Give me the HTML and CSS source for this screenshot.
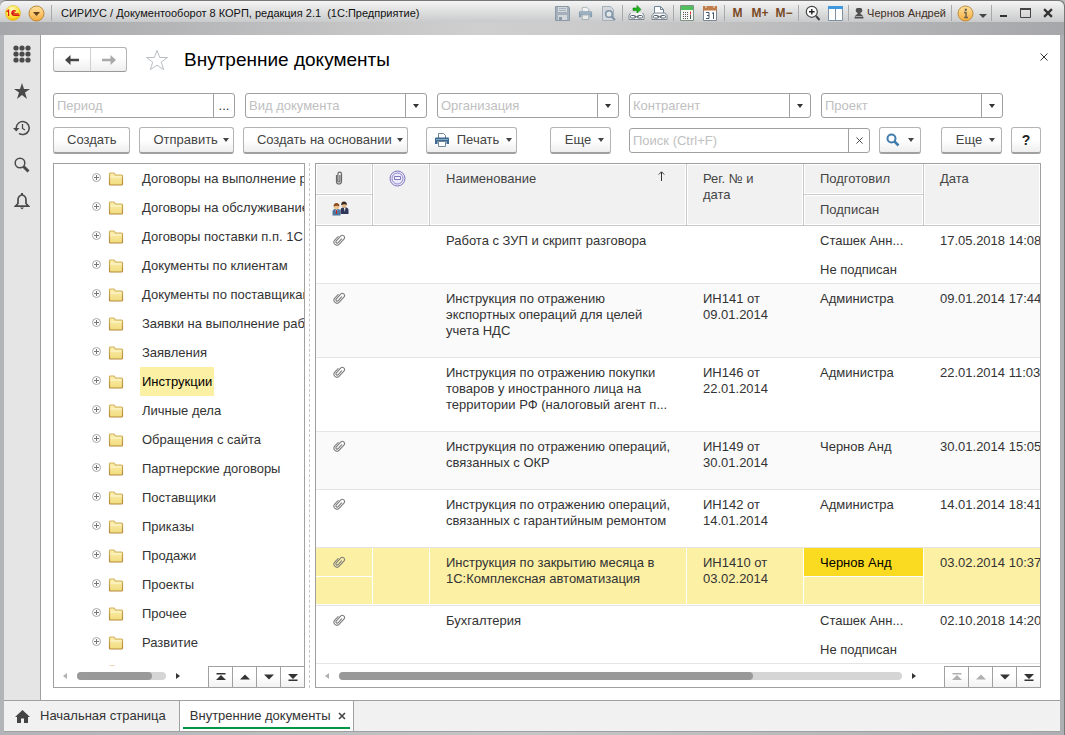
FILE: index.html
```html
<!DOCTYPE html>
<html lang="ru">
<head>
<meta charset="utf-8">
<title>Внутренние документы</title>
<link rel="stylesheet" href="styles.css">
</head>
<body>
<svg class="defs" width="0" height="0" aria-hidden="true">
  <defs>
    <linearGradient id="g-folder" x1="0" y1="0" x2="0" y2="1"><stop offset="0" stop-color="#fbeeb0"/><stop offset="1" stop-color="#f1dc7c"/></linearGradient>
    <linearGradient id="g-edge" x1="0" y1="0" x2="0" y2="1"><stop offset="0" stop-color="#d3b45c"/><stop offset="1" stop-color="#b48a3c"/></linearGradient>
    <radialGradient id="g-logo" cx=".45" cy=".3" r=".7"><stop offset="0" stop-color="#fffbd0"/><stop offset=".6" stop-color="#ffe83a"/><stop offset="1" stop-color="#f2b50c"/></radialGradient>
    <linearGradient id="g-amber" x1="0" y1="0" x2="0" y2="1"><stop offset="0" stop-color="#ffe3a0"/><stop offset="1" stop-color="#f5ab3c"/></linearGradient>
    <symbol id="i-folder" viewBox="0 0 16 14"><path d="M1.500 12V2q0-1 1-1h3.500l1.500 2h6q1 0 1 1v8q0 1-1 1h-11q-1 0-1-1z" fill="url(#g-folder)" stroke="url(#g-edge)" stroke-width="1.200"/><path d="M2.500 5h11" stroke="#fff8d6"/></symbol>
    <symbol id="i-plus" viewBox="0 0 9 9"><circle cx="4.500" cy="4.500" r="4" fill="#fff" stroke="#a8a8a8"/><path d="M2 4.500h5M4.500 2v5" stroke="#777"/></symbol>
    <symbol id="i-clip" viewBox="0 0 14 14"><path transform="rotate(42 7 7)" d="M4 5v5a3 3 0 0 0 6 0V3a2.200 2.200 0 0 0-4.400 0v6.500a1.300 1.300 0 0 0 2.600 0V4.500" fill="none" stroke="#7d7d7d" stroke-width="1.100" stroke-linecap="round"/></symbol>
    <symbol id="i-down" viewBox="0 0 6 4"><path d="M0 0h6L3 4z" fill="currentColor"/></symbol>
    <symbol id="i-tri-up" viewBox="0 0 10 10"><path d="M0 7.500h10L5 2.500z" fill="currentColor"/></symbol>
    <symbol id="i-tri-down" viewBox="0 0 10 10"><path d="M0 2.500h10L5 7.500z" fill="currentColor"/></symbol>
    <symbol id="i-tri-top" viewBox="0 0 10 10"><path d="M.5 1h9v1.500h-9zM0 8h10L5 3z" fill="currentColor"/></symbol>
    <symbol id="i-tri-end" viewBox="0 0 10 10"><path d="M.5 7.500h9V9h-9zM0 2h10L5 7z" fill="currentColor"/></symbol>
    <symbol id="i-left" viewBox="0 0 4 6"><path d="M4 0v6L0 3z" fill="currentColor"/></symbol>
    <symbol id="i-right" viewBox="0 0 4 6"><path d="M0 0v6l4-3z" fill="currentColor"/></symbol>
    <symbol id="i-cross" viewBox="0 0 8 8"><path d="M.5.5l7 7M7.500.5l-7 7" stroke="currentColor" fill="none"/></symbol>
    <symbol id="i-printer" viewBox="0 0 16 16"><path d="M4.500 6V1.500h5l2 2V6" fill="#fff" stroke="#6f8797"/><path d="M1 6.500q0-1 1-1h12q1 0 1 1V12h-2.500V9.500h-9V12H1z" fill="#3d6890"/><path d="M2 7.500h12" stroke="#86a9c8"/><path d="M4.500 9.500h7v5h-7z" fill="#fff" stroke="#6f8797"/></symbol>
  </defs>
</svg>

<div class="window">
  <header class="titlebar">
    <button class="tb logo" aria-label="1С"><svg width="16" height="16" viewBox="0 0 16 16"><circle cx="8" cy="8" r="7.500" fill="url(#g-logo)" stroke="#e3b52a" stroke-width=".6"/><path d="M1.500 6.800 3.600 5.200V11M10.800 6.300A2.400 2.400 0 1 0 8.800 10.400h5.700M9.600 7.600a.9.900 0 1 0-.8 1.300h5" fill="none" stroke="#dc1a12" stroke-width="1.200"/></svg></button>
    <button class="tb menu" aria-label="Главное меню"><svg width="17" height="17" viewBox="0 0 17 17"><circle cx="8.500" cy="8.500" r="7.500" fill="url(#g-amber)" stroke="#bd8432"/><path d="M5 7h7l-3.500 4z" fill="#5f4321"/></svg></button>
    <span class="sep"></span>
    <span class="app-title">СИРИУС / Документооборот 8 КОРП, редакция 2.1&nbsp; (1С:Предприятие)</span>
    <div class="tools">
      <button class="tb w23" aria-label="Сохранить"><svg width="15" height="15" viewBox="0 0 15 15"><path d="M.5.5h13l1 1v13H.5z" fill="#a3afbb" stroke="#8b98a5"/><path d="M3 1h9v5H3zM3 9h9v5H3z" fill="#d2d7dc"/><path d="M4 11h3v3H4z" fill="#8b98a5"/><path d="M4 2.500h7M4 4.500h7" stroke="#a9b3bd"/></svg></button>
      <button class="tb w23" aria-label="Печать"><svg class="faded" width="15" height="15"><use href="#i-printer"/></svg></button>
      <button class="tb w23" aria-label="Предварительный просмотр"><svg width="15" height="15" viewBox="0 0 15 15"><path d="M1.500.5h8l3 3v11h-11z" fill="#d5d9dd" stroke="#a3afb9"/><circle cx="8" cy="8" r="3.300" fill="#e3e7ea" stroke="#7d92a4" stroke-width="1.500"/><path d="m10.500 10.500 3.500 3.500" stroke="#7d92a4" stroke-width="2"/></svg></button>
      <span class="sep"></span>
      <button class="tb w23" aria-label="Получить ссылку"><svg width="17" height="16" viewBox="0 0 17 16"><path d="M5 3h4V.5L13 4.500 9 8V5.500H5z" fill="#21b521" stroke="#0a7a0a" stroke-width=".6"/><path d="M2.500 8 1 10.500v4h15v-4L14.500 8" fill="#f5f5f5" stroke="#7b8894"/><rect x="2.500" y="10.500" width="5" height="2.500" rx="1" fill="#fff" stroke="#556370"/><rect x="9.500" y="10.500" width="5" height="2.500" rx="1" fill="#fff" stroke="#556370"/><path d="M6 11.800h5" stroke="#556370"/></svg></button>
      <button class="tb w23" aria-label="Перейти по ссылке"><svg width="17" height="16" viewBox="0 0 17 16"><path d="M3.500 9V1.500h6l3 3V9" fill="#fff" stroke="#6f8499"/><path d="M9.500 1.500v3h3" fill="none" stroke="#6f8499"/><path d="M3 8 1 10.500v4h15v-4L14 8z" fill="#f5f5f5" stroke="#7b8894"/><rect x="2.500" y="10.500" width="5" height="2.500" rx="1" fill="#fff" stroke="#556370"/><rect x="9.500" y="10.500" width="5" height="2.500" rx="1" fill="#fff" stroke="#556370"/><path d="M6 11.800h5" stroke="#556370"/></svg></button>
      <span class="sep"></span>
      <button class="tb w22" aria-label="Калькулятор"><svg width="14" height="16" viewBox="0 0 14 16"><path d="M.5.5h13v15H.5z" fill="#f4f7f4" stroke="#7c9384"/><path d="M1 1h12v4H1z" fill="#4fc05c"/><path d="M3 7.500h6M3 9.500h6M3 11.500h6M3 13.500h6" stroke="#555" stroke-dasharray="1 1"/><path d="M10.500 6.500v3" stroke="#e5351f"/><path d="M10.500 10v4" stroke="#555"/></svg></button>
      <button class="tb w24" aria-label="Календарь"><svg width="14" height="16" viewBox="0 0 14 16"><path d="M.5 2.500h13v13H.5z" fill="#fff" stroke="#7b8894"/><path d="M0 1h14v4.500H0z" fill="#c07d4a"/><path d="M3 0v3M11 0v3" stroke="#eee"/><path d="M3 7.500h3v6H3M4 10.500h2M9 8.500l1.500-1v6.500" fill="none" stroke="#45586c"/></svg></button>
      <span class="sep"></span>
      <button class="tb mem w21">M</button>
      <button class="tb mem w24">M+</button>
      <button class="tb mem w24">M−</button>
      <span class="sep"></span>
      <button class="tb w23" aria-label="Масштаб"><svg width="16" height="16" viewBox="0 0 16 16"><circle cx="6.800" cy="6.800" r="5.500" fill="#fff" stroke="#444" stroke-width="1.200"/><path d="M4 6.800h5.600M6.800 4v5.600" stroke="#222" stroke-width="1.400"/><path d="m11 11 3.500 4" stroke="#444" stroke-width="2"/></svg></button>
      <button class="tb w22" aria-label="Панели"><svg width="15" height="15" viewBox="0 0 15 15"><path d="M.5.5h14v14H.5z" fill="#fff" stroke="#7d91a3"/><path d="M0 0h15v3H0z" fill="#3f97dd"/><path d="M7.500 3v12" stroke="#7d91a3"/></svg></button>
      <span class="sep"></span>
      <button class="tb user"><svg width="10" height="11" viewBox="0 0 10 11"><path d="M5 0a2.500 2.500 0 0 1 1.500 4.800V6Q9.500 7 9.500 10.500H.5Q.5 7 3.500 6V4.800A2.500 2.500 0 0 1 5 0z" fill="#505050"/><path d="M1.500 8.500h7" stroke="#aaa"/></svg><span>Чернов Андрей</span></button>
      <span class="sep"></span>
      <button class="tb w22" aria-label="Информация"><svg width="17" height="17" viewBox="0 0 17 17"><circle cx="8.500" cy="8.500" r="7.500" fill="url(#g-amber)" stroke="#bd8c3a"/><path d="M7 7.500h2v4.500M7 12.500h4" stroke="#6e6552" stroke-width="1.500" fill="none"/><circle cx="8.800" cy="4.800" r="1.200" fill="#6e6552"/></svg></button>
      <button class="tb w13" aria-label="Ещё"><svg class="low" width="8" height="4" viewBox="0 0 8 4"><path d="M0 0h8L4 4z" fill="#444"/></svg></button>
      <span class="sep"></span>
      <button class="tb w20" aria-label="Свернуть"><svg width="8" height="10" viewBox="0 0 8 10"><path d="M0 8h7" stroke="#333" stroke-width="2"/></svg></button>
      <button class="tb w22" aria-label="Развернуть"><svg width="11" height="10" viewBox="0 0 11 10"><path d="M.5.5h10v9H.5z" fill="none" stroke="#444"/><path d="M0 1h11" stroke="#444" stroke-width="2"/></svg></button>
      <button class="tb w24" aria-label="Закрыть"><svg width="10" height="10" viewBox="0 0 9 9"><path d="m1 1 7 7M8 1 1 8" stroke="#333" stroke-width="2"/></svg></button>
    </div>
  </header>

  <div class="body">
    <nav class="sidebar">
      <button class="side" aria-label="Разделы"><svg width="18" height="18" viewBox="0 0 18 18" fill="#4a4a4a"><circle cx="3" cy="3" r="2.600"/><circle cx="9" cy="3" r="2.600"/><circle cx="15" cy="3" r="2.600"/><circle cx="3" cy="9" r="2.600"/><circle cx="9" cy="9" r="2.600"/><circle cx="15" cy="9" r="2.600"/><circle cx="3" cy="15" r="2.600"/><circle cx="9" cy="15" r="2.600"/><circle cx="15" cy="15" r="2.600"/></svg></button>
      <button class="side" aria-label="Избранное"><svg width="16" height="16" viewBox="0 0 16 16"><path d="m8 0 2 6h6l-5 3.600L13 16l-5-4-5 4 2-6.400L0 6h6z" fill="#4a4a4a"/></svg></button>
      <button class="side" aria-label="История"><svg width="18" height="16" viewBox="0 0 18 16"><path d="M3.200 8A6.500 6.500 0 1 1 6 13.400" fill="none" stroke="#4a4a4a" stroke-width="1.500"/><path d="M0 8h6.500L3.200 11.500z" fill="#4a4a4a"/><path d="M9.500 4v4.500l2.500 1.500" fill="none" stroke="#4a4a4a" stroke-width="1.300"/></svg></button>
      <button class="side" aria-label="Поиск"><svg width="16" height="16" viewBox="0 0 16 16"><circle cx="6" cy="6" r="4.800" fill="none" stroke="#4a4a4a" stroke-width="1.500"/><path d="m9.500 9.500 5 5" stroke="#4a4a4a" stroke-width="3"/></svg></button>
      <button class="side" aria-label="Уведомления"><svg width="16" height="17" viewBox="0 0 16 17"><path d="M8 1.800Q4 3 4 7v3.500L1.500 13.200h13L12 10.500V7Q12 3 8 1.800z" fill="none" stroke="#4a4a4a" stroke-width="1.700"/><path d="M6 14.500h4l-2 2zM7 0h2v2H7z" fill="#4a4a4a"/></svg></button>
    </nav>

    <main class="page">
      <div class="heading">
        <div class="nav-pair">
          <button aria-label="Назад"><svg width="14" height="10" viewBox="0 0 14 10"><path d="M0 5l5.500-5v3.800H14v2.400H5.500V10z" fill="#444"/></svg></button>
          <button aria-label="Вперед"><svg width="14" height="10" viewBox="0 0 14 10"><path d="M14 5 8.500 0v3.800H0v2.400h8.500V10z" fill="#a9a9a9"/></svg></button>
        </div>
        <button class="fav" aria-label="В избранное"><svg width="24" height="22" viewBox="0 0 24 22"><path d="m12 1.500 2.700 7h7.800l-6.200 4.600 2.300 7.600-6.600-4.600-6.600 4.600 2.300-7.600L1.500 8.500h7.800z" fill="#fff" stroke="#b9bec4"/></svg></button>
        <h1>Внутренние документы</h1>
        <button class="close" aria-label="Закрыть"><svg width="8" height="8"><use href="#i-cross"/></svg></button>
      </div>

      <div class="filters">
        <div class="field"><input aria-label="Период" placeholder="Период"><button aria-label="Выбрать">...</button></div>
        <div class="field"><input aria-label="Вид документа" placeholder="Вид документа"><button aria-label="Выбрать"><svg width="6" height="4"><use href="#i-down"/></svg></button></div>
        <div class="field"><input aria-label="Организация" placeholder="Организация"><button aria-label="Выбрать"><svg width="6" height="4"><use href="#i-down"/></svg></button></div>
        <div class="field"><input aria-label="Контрагент" placeholder="Контрагент"><button aria-label="Выбрать"><svg width="6" height="4"><use href="#i-down"/></svg></button></div>
        <div class="field"><input aria-label="Проект" placeholder="Проект"><button aria-label="Выбрать"><svg width="6" height="4"><use href="#i-down"/></svg></button></div>
      </div>

      <div class="toolbar">
        <div class="group">
          <button class="btn">Создать</button>
          <button class="btn drop">Отправить<svg width="6" height="4"><use href="#i-down"/></svg></button>
          <button class="btn drop">Создать на основании<svg width="6" height="4"><use href="#i-down"/></svg></button>
        </div>
        <button class="btn drop print"><svg width="16" height="16"><use href="#i-printer"/></svg>Печать<svg width="6" height="4"><use href="#i-down"/></svg></button>
        <div class="group right">
          <button class="btn drop more">Еще<svg width="6" height="4"><use href="#i-down"/></svg></button>
          <div class="field search"><input aria-label="Поиск" placeholder="Поиск (Ctrl+F)"><button aria-label="Очистить"><svg width="7" height="7"><use href="#i-cross"/></svg></button></div>
          <button class="btn drop find" aria-label="Найти"><svg width="14" height="14" viewBox="0 0 14 14"><circle cx="5.500" cy="5.500" r="4" fill="#fff" stroke="#3f7cad" stroke-width="2"/><path d="m8.500 8.500 4 4" stroke="#3f7cad" stroke-width="2.500"/></svg><svg width="6" height="4"><use href="#i-down"/></svg></button>
          <button class="btn drop more last">Еще<svg width="6" height="4"><use href="#i-down"/></svg></button>
          <button class="btn help">?</button>
        </div>
      </div>

      <div class="panes">
        <section class="pane tree">
          <ul class="nodes">
            <li><svg class="exp"><use href="#i-plus"/></svg><svg class="fld"><use href="#i-folder"/></svg><span>Договоры на выполнение работ</span></li>
            <li><svg class="exp"><use href="#i-plus"/></svg><svg class="fld"><use href="#i-folder"/></svg><span>Договоры на обслуживание</span></li>
            <li><svg class="exp"><use href="#i-plus"/></svg><svg class="fld"><use href="#i-folder"/></svg><span>Договоры поставки п.п. 1С</span></li>
            <li><svg class="exp"><use href="#i-plus"/></svg><svg class="fld"><use href="#i-folder"/></svg><span>Документы по клиентам</span></li>
            <li><svg class="exp"><use href="#i-plus"/></svg><svg class="fld"><use href="#i-folder"/></svg><span>Документы по поставщикам</span></li>
            <li><svg class="exp"><use href="#i-plus"/></svg><svg class="fld"><use href="#i-folder"/></svg><span>Заявки на выполнение работ</span></li>
            <li><svg class="exp"><use href="#i-plus"/></svg><svg class="fld"><use href="#i-folder"/></svg><span>Заявления</span></li>
            <li><svg class="exp"><use href="#i-plus"/></svg><svg class="fld"><use href="#i-folder"/></svg><span class="current">Инструкции</span></li>
            <li><svg class="exp"><use href="#i-plus"/></svg><svg class="fld"><use href="#i-folder"/></svg><span>Личные дела</span></li>
            <li><svg class="exp"><use href="#i-plus"/></svg><svg class="fld"><use href="#i-folder"/></svg><span>Обращения с сайта</span></li>
            <li><svg class="exp"><use href="#i-plus"/></svg><svg class="fld"><use href="#i-folder"/></svg><span>Партнерские договоры</span></li>
            <li><svg class="exp"><use href="#i-plus"/></svg><svg class="fld"><use href="#i-folder"/></svg><span>Поставщики</span></li>
            <li><svg class="exp"><use href="#i-plus"/></svg><svg class="fld"><use href="#i-folder"/></svg><span>Приказы</span></li>
            <li><svg class="exp"><use href="#i-plus"/></svg><svg class="fld"><use href="#i-folder"/></svg><span>Продажи</span></li>
            <li><svg class="exp"><use href="#i-plus"/></svg><svg class="fld"><use href="#i-folder"/></svg><span>Проекты</span></li>
            <li><svg class="exp"><use href="#i-plus"/></svg><svg class="fld"><use href="#i-folder"/></svg><span>Прочее</span></li>
            <li><svg class="exp"><use href="#i-plus"/></svg><svg class="fld"><use href="#i-folder"/></svg><span>Развитие</span></li>
            <li><svg class="exp"></svg><svg class="fld"><use href="#i-folder"/></svg></li>
          </ul>
          <div class="scroller">
            <div class="hscroll"><svg class="off" width="4" height="6"><use href="#i-left"/></svg><div class="track"><div class="thumb wide"></div></div><svg width="4" height="6"><use href="#i-right"/></svg></div>
            <div class="jumps">
              <button aria-label="В начало"><svg width="10" height="10"><use href="#i-tri-top"/></svg></button>
              <button aria-label="Вверх"><svg width="10" height="10"><use href="#i-tri-up"/></svg></button>
              <button aria-label="Вниз"><svg width="10" height="10"><use href="#i-tri-down"/></svg></button>
              <button aria-label="В конец"><svg width="10" height="10"><use href="#i-tri-end"/></svg></button>
            </div>
          </div>
        </section>
        <div class="splitter"></div>
        <section class="pane list">
          <div class="grid-view">
            <table class="docs">
              <colgroup><col class="c-clip"><col class="c-stamp"><col class="c-name"><col class="c-reg"><col class="c-who"><col class="c-date"></colgroup>
              <thead>
                <tr>
                  <th class="ico clip"><svg width="8" height="14" viewBox="0 0 8 14"><path d="M1.500 4v6.500a2.500 2.500 0 0 0 5 0V3a1.800 1.800 0 0 0-3.600 0v7a1 1 0 0 0 2 0V4" fill="none" stroke="#666" stroke-width="1.200"/></svg></th>
                  <th class="ico" rowspan="2"><svg width="17" height="17" viewBox="0 0 17 17"><circle cx="8.500" cy="8.500" r="7.500" fill="#eceafa" stroke="#7d76bd"/><circle cx="8.500" cy="8.500" r="5.500" fill="none" stroke="#8d87c8"/><path d="M5.500 6.500h6v3h-6z" fill="#f4f3fd" stroke="#7d76bd"/></svg></th>
                  <th rowspan="2"><div class="sorted"><span>Наименование</span><svg width="7" height="10" viewBox="0 0 7 10"><path d="M3.500 10V1M.8 3.500 3.500.8l2.700 2.700" fill="none" stroke="#333"/></svg></div></th>
                  <th rowspan="2">Рег. № и<br>дата</th>
                  <th>Подготовил</th>
                  <th rowspan="2">Дата</th>
                </tr>
                <tr>
                  <th class="ico"><svg width="17" height="15" viewBox="0 0 17 15"><path d="M8.500 13V9q0-2 2-2.500h4q2 .5 2 2.500v4z" fill="#2e3557"/><path d="M12 7h1.500l-.7 4z" fill="#fff"/><circle cx="12" cy="4" r="2.600" fill="#e8b98a"/><path d="M9.200 4Q9 .5 12 .5t2.900 3.500Q13 2.500 9.200 4z" fill="#3a2a20"/><path d="M.5 14.500v-4Q.5 8.500 2.500 8h4q2 .5 2 2.500v4z" fill="#4a76a0"/><path d="M3.500 8.500h2l-1 4.500z" fill="#fff"/><path d="M4.500 9v4" stroke="#c22"/><circle cx="4.500" cy="5.500" r="2.700" fill="#f0c08d"/><path d="M1.600 5.500Q1.500 2 4.500 2t2.900 3.500Q5.500 4 1.600 5.500z" fill="#8a4d1e"/></svg></th>
                  <th>Подписан</th>
                </tr>
              </thead>
              <tbody>
                <tr><td class="ico"><svg width="14" height="14"><use href="#i-clip"/></svg></td><td></td><td>Работа с ЗУП и скрипт разговора</td><td></td><td class="duo"><div>Сташек Анн...</div><div>Не подписан</div></td><td class="date">17.05.2018 14:08</td></tr>
                <tr class="alt"><td class="ico"><svg width="14" height="14"><use href="#i-clip"/></svg></td><td></td><td>Инструкция по отражению экспортных операций для целей учета НДС</td><td>ИН141 от 09.01.2014</td><td class="duo"><div>Администра</div></td><td class="date">09.01.2014 17:44</td></tr>
                <tr><td class="ico"><svg width="14" height="14"><use href="#i-clip"/></svg></td><td></td><td>Инструкция по отражению покупки товаров у иностранного лица на территории РФ (налоговый агент п...</td><td>ИН146 от 22.01.2014</td><td class="duo"><div>Администра</div></td><td class="date">22.01.2014 11:03</td></tr>
                <tr class="alt"><td class="ico"><svg width="14" height="14"><use href="#i-clip"/></svg></td><td></td><td>Инструкция по отражению операций, связанных с ОКР</td><td>ИН149 от 30.01.2014</td><td class="duo"><div>Чернов Анд</div></td><td class="date">30.01.2014 15:05</td></tr>
                <tr><td class="ico"><svg width="14" height="14"><use href="#i-clip"/></svg></td><td></td><td>Инструкция по отражению операций, связанных с гарантийным ремонтом</td><td>ИН142 от 14.01.2014</td><td class="duo"><div>Администра</div></td><td class="date">14.01.2014 18:41</td></tr>
                <tr class="selected"><td class="duo ico"><div><svg width="14" height="14"><use href="#i-clip"/></svg></div><div></div></td><td></td><td>Инструкция по закрытию месяца в 1С:Комплексная автоматизация</td><td>ИН1410 от 03.02.2014</td><td class="duo"><div class="focus">Чернов Анд</div><div></div></td><td class="date">03.02.2014 10:37</td></tr>
                <tr><td class="ico"><svg width="14" height="14"><use href="#i-clip"/></svg></td><td></td><td>Бухгалтерия</td><td></td><td class="duo"><div>Сташек Анн...</div><div>Не подписан</div></td><td class="date">02.10.2018 14:20</td></tr>
              </tbody>
            </table>
          </div>
          <div class="scroller">
            <div class="hscroll"><svg class="off" width="4" height="6"><use href="#i-left"/></svg><div class="track"><div class="thumb"></div></div><svg width="4" height="6"><use href="#i-right"/></svg></div>
            <div class="jumps">
              <button class="off" aria-label="В начало" disabled><svg width="10" height="10"><use href="#i-tri-top"/></svg></button>
              <button class="off" aria-label="Вверх" disabled><svg width="10" height="10"><use href="#i-tri-up"/></svg></button>
              <button aria-label="Вниз"><svg width="10" height="10"><use href="#i-tri-down"/></svg></button>
              <button aria-label="В конец"><svg width="10" height="10"><use href="#i-tri-end"/></svg></button>
            </div>
          </div>
        </section>
      </div>
    </main>
  </div>

  <footer class="tabs">
    <button class="tab"><svg width="15" height="13" viewBox="0 0 15 13"><path d="M7.500 0 15 7h-2v6H9V8.500H6V13H2V7H0z" fill="#444"/></svg>Начальная страница</button>
    <div class="tab active"><button class="tab-name">Внутренние документы</button><button class="tab-close" aria-label="Закрыть вкладку"><svg width="8" height="8" viewBox="0 0 8 8"><path d="m1 1 6 6M7 1 1 7" stroke="#444" stroke-width="1.600"/></svg></button></div>
  </footer>
</div>
</body>
</html>
```
FILE: styles.css
```css
* { box-sizing: border-box; }

body {
  margin: 0;
  font: 13px/16px "Liberation Sans", Arial, sans-serif;
  color: #333;
  background: #b9babc;
}

button, input {
  font: inherit;
  color: inherit;
  margin: 0;
  padding: 0;
  border: 0;
  background: none;
}

button { display: inline-flex; align-items: center; justify-content: center; white-space: nowrap; }
svg { display: block; flex: none; }
.defs { position: absolute; }

.window {
  display: flex;
  flex-direction: column;
  height: 100vh;
  padding: 0 4px 3px;
  background: linear-gradient(90deg, #b3b4b7, #c4c5c6 50%, #aeafb2);
  border-top: 1px solid #77787a;
  border-right: 1px solid #77787a;
  border-radius: 6px 6px 0 0;
}

/* Title bar */
.titlebar {
  display: flex;
  align-items: center;
  flex: none;
  height: 34px;
  margin: 0 -4px;
  padding: 0 4px 10px 3px;
  background:
    linear-gradient(#f4f4f4, #c9cacb) top / 100% 21px no-repeat,
    linear-gradient(90deg, #a6a7aa, #cfcfcf 45%, #cbcbcb 55%, #a6a7aa);
  border-radius: 6px 6px 0 0;
}
.tb { height: 24px; color: #444; }
.logo { width: 20px; }
.menu { width: 26px; }
.sep { flex: none; width: 1px; height: 16px; margin: 0 2px; background: #a9a9ab; }
.app-title { margin-left: 7px; font-size: 11px; color: #111; white-space: nowrap; }
.tools { display: flex; align-items: center; margin-left: auto; }
.w13 { width: 13px; }
.w20 { width: 20px; }
.w21 { width: 21px; }
.w22 { width: 22px; }
.w23 { width: 23px; }
.w24 { width: 24px; }
.faded { opacity: .5; }
.low { margin-top: 6px; }
.mem { font-size: 12px; font-weight: bold; color: #7b4a26; }
.user { gap: 3px; width: 98px; font-size: 11px; color: #3f2f1c; }

/* Body */
.body { display: flex; flex: 1; min-height: 0; background: #fff; }
.sidebar {
  display: flex;
  flex-direction: column;
  flex: none;
  width: 37px;
  background: #e5e5e5;
  border-right: 1px solid #a0a0a0;
}
.side { height: 37px; }
.page {
  display: flex;
  flex-direction: column;
  flex: 1;
  min-width: 0;
  padding: 12px 19px 12px 12px;
}

.heading { display: flex; align-items: center; height: 25px; }
.nav-pair {
  display: flex;
  height: 25px;
  border: 1px solid #b4b4b4;
  border-bottom-color: #999;
  border-radius: 3px;
  background: linear-gradient(#fff 40%, #eee);
}
.nav-pair button { width: 36px; }
.nav-pair button + button { border-left: 1px solid #d0d0d0; }
.fav { margin-left: 18px; }
h1 { margin: 0 0 0 15px; font-size: 19px; line-height: 24px; font-weight: normal; color: #000; white-space: nowrap; }
.close { width: 16px; height: 16px; margin: 0 -11px 6px auto; }

.filters { display: flex; gap: 10px; margin-top: 21px; }
.field {
  display: flex;
  flex: 0 1 182px;
  min-width: 0;
  height: 25px;
  border: 1px solid #a0a0a0;
  border-radius: 3px;
  background: #fff;
}
.field input { flex: 1; min-width: 0; padding-left: 3px; outline: 0; }
.field input::placeholder { color: #c0c0c0; opacity: 1; }
.field button { flex: none; width: 21px; border-left: 1px solid #a0a0a0; }

.toolbar { display: flex; align-items: center; margin-top: 9px; }
.group { display: flex; align-items: center; gap: 9px; }
.right { flex: 1; min-width: 0; justify-content: flex-end; }
.btn {
  flex: none;
  height: 27px;
  padding: 0 13px;
  border: 1px solid #b4b4b4;
  border-bottom: 2px solid #a0a0a0;
  border-radius: 3px;
  background: linear-gradient(#fff 50%, #eee);
  color: #444;
}
.drop { gap: 5px; padding-right: 4px; }
.print { gap: 7px; margin-left: 18px; padding-left: 7px; }
.more { width: 61px; gap: 7px; padding-left: 12px; margin-right: 9px; }
.last { margin: 0 0 0 11px; }
.search { flex: 0 1 241px; }
.find { width: 42px; gap: 8px; padding: 0; }
.help { width: 30px; padding: 0; font-size: 14px; font-weight: bold; color: #222; }

/* Panes */
.panes { display: flex; flex: 1; min-height: 0; margin-top: 9px; }
.pane { display: flex; flex-direction: column; min-width: 0; border: 1px solid #a0a0a0; }
.tree { flex: 0 0 252px; }
.list { flex: 1; }
.splitter { flex: none; width: 5px; margin-right: 5px; border-right: 1px dashed #c8c8c8; }

.nodes { flex: 1; min-height: 0; margin: 0; padding: 0; overflow: hidden; list-style: none; }
.nodes li { display: flex; align-items: center; height: 29px; padding-left: 38px; white-space: nowrap; }
.exp { width: 9px; height: 9px; margin-bottom: 2px; }
.fld { width: 16px; height: 14px; margin: 0 16px 0 7px; }
.nodes span { padding: 7px 2px 6px; }
.current { background: #fcf0a5; color: #000; }

.scroller { display: flex; flex: none; height: 21px; }
.hscroll { display: flex; align-items: center; flex: 1; gap: 10px; padding: 0 28px 2px 9px; }
.track { flex: 1; height: 8px; border-radius: 4px; background: #d5d5d5; }
.thumb { width: 73.5%; height: 8px; border-radius: 4px; background: #999; }
.wide { width: 84%; }
.off { color: #b0b0b0; }
.jumps { display: flex; flex: none; border-top: 1px solid #a0a0a0; color: #333; }
.jumps button { width: 24px; border-left: 1px solid #a0a0a0; background: linear-gradient(#fff 40%, #f2f2f2); }
.jumps .off { color: #b0b0b0; }

.grid-view { flex: 1; min-height: 0; overflow: hidden; }
.docs { width: 100%; table-layout: fixed; border-collapse: separate; border-spacing: 0; }
.c-clip, .c-stamp { width: 57px; }
.c-name { width: 257px; }
.c-reg { width: 117px; }
.c-who { width: 120px; }
.docs th {
  height: 31px;
  padding: 7px 15px 7px 16px;
  border-right: 1px solid #c8c8c8;
  border-bottom: 1px solid #c8c8c8;
  background: #f1f1f1;
  box-shadow: inset 0 0 0 1px #fff;
  font-weight: normal;
  text-align: left;
  vertical-align: top;
  color: #444;
}
.docs th:last-child[rowspan] { border-right: 0; }
.docs .ico { padding-left: 16px; padding-right: 0; }
.docs th.ico { padding-top: 6px; }
.docs th.clip { padding: 7px 0 0 19px; }
.sorted { display: flex; justify-content: space-between; padding-right: 6px; }
.docs td {
  padding: 7px 16px 18px;
  border-bottom: 1px solid #e5e5e5;
  vertical-align: top;
}
.docs td.date { padding-right: 0; white-space: nowrap; overflow: hidden; }
.docs td.duo { padding: 0; }
.duo div { height: 28px; padding: 7px 0 5px 16px; }
.duo div + div { height: 29px; padding-top: 8px; }
.alt td { background: #fafafa; }
.selected td { background: #fcf0a5; border-right: 1px solid #fff; box-shadow: inset 0 -1px #fff; }
.selected td:last-child { border-right: 0; }
.selected .duo div + div { border-top: 1px solid #fff; }
.selected .focus { background: #fadb21; color: #000; }

/* Bottom tabs */
.tabs { display: flex; flex: none; height: 32px; background: #f1f1f1; border-top: 1px solid #a0a0a0; border-bottom: 1px solid #a0a0a0; }
.tab { display: flex; align-items: center; gap: 10px; padding: 0 13px 0 11px; color: #333; }
.active {
  gap: 7px;
  padding: 0 7px 0 10px;
  border-left: 1px solid #a0a0a0;
  border-right: 1px solid #a0a0a0;
  background: linear-gradient(#009646, #009646) center bottom 2px / calc(100% - 6px) 2px no-repeat #fff;
}
```
